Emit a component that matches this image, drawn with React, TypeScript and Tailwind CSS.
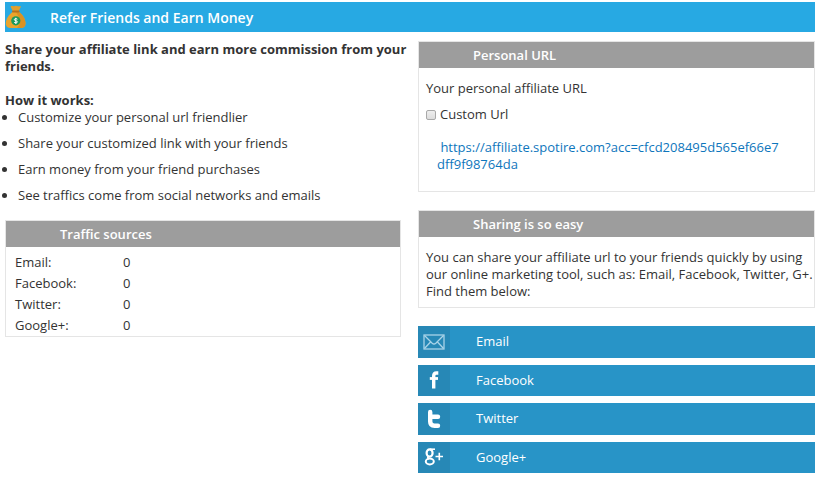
import type { ReactNode } from "react";

const MoneyBagIcon = () => (
  <svg viewBox="0 0 22 24" className="w-[22px] h-6" aria-hidden="true">
    <path
      d="M7.5 7C4 9.500 0.800 14 0.800 18.500C0.800 21.800 3 23 6 23H15.500C18.500 23 20.500 21.500 20.500 18.500C20.500 14 17.500 9.500 14 7Z"
      fill="#eaa42c"
    />
    <path
      d="M10.800 7H14C17.500 9.500 20.500 14 20.500 18.500C20.500 21.500 18.500 23 15.500 23H12C17 19 14 11 10.800 7Z"
      fill="#db9223"
    />
    <path d="M5.500 1.500C7 0.500 8 1.600 9 1.200C10.500 0.500 11.500 0.500 13 1.200C14 1.600 15 0.700 16 1.600L13.800 6H7.700Z" fill="#e0a02e" />
    <rect x="7" y="5.600" width="7.600" height="1.800" rx="0.900" fill="#b5701f" />
    <circle cx="10.800" cy="15.800" r="4.600" fill="#1d9a5b" />
    <path
      d="M12.400 14.200C11.600 13.400 9.300 13.400 9.300 14.700C9.300 16.100 12.400 15.400 12.400 16.900C12.400 18.200 10 18.200 9.200 17.300M10.800 12.800V18.800"
      fill="none"
      stroke="#fff"
      strokeWidth="1"
    />
  </svg>
);

const MailIcon = () => (
  <svg viewBox="0 0 22 16" className="w-[22px] h-4" fill="none" stroke="#a9d3e8" strokeWidth="1.300" aria-hidden="true">
    <rect x="1" y="1" width="20" height="14" />
    <path d="M1.500 1.500L9.200 9.200Q11 10.800 12.800 9.200L20.500 1.500M1.500 14.500L7.500 8M20.500 14.500L14.500 8" />
  </svg>
);

const FacebookIcon = () => (
  <svg viewBox="0 0 10 18" className="w-2.5 h-[18px]" fill="none" stroke="#fff" aria-hidden="true">
    <path d="M4.700 17.500V5Q4.700 2 7.500 2H9.300" strokeWidth="3.400" />
    <path d="M0.800 7.500H9" strokeWidth="2.800" />
  </svg>
);

const TwitterIcon = () => (
  <svg viewBox="0 0 14 20" className="w-3.5 h-5" fill="none" stroke="#fff" strokeWidth="4.400" strokeLinecap="round" aria-hidden="true">
    <path d="M3.200 3V12.500Q3.200 16.800 7.500 16.800H11" />
    <path d="M3.500 7.800H11" />
  </svg>
);

const GooglePlusIcon = () => (
  <svg viewBox="0 0 20 18" className="w-5 h-[18px]" fill="none" stroke="#fff" aria-hidden="true">
    <ellipse cx="5.600" cy="5" rx="3" ry="3.600" strokeWidth="2.200" />
    <path d="M5.800 1.200H11" strokeWidth="1.600" />
    <path d="M4.200 8.500Q3.200 10 5.200 10.700" strokeWidth="1.800" />
    <ellipse cx="5.800" cy="13.500" rx="4" ry="2.900" strokeWidth="2" />
    <path d="M11.500 8.500H19M15.300 4.800V12.200" strokeWidth="1.600" />
  </svg>
);

const steps = [
  "Customize your personal url friendlier",
  "Share your customized link with your friends",
  "Earn money from your friend purchases",
  "See traffics come from social networks and emails",
];

const traffic = [
  { source: "Email:", count: 0 },
  { source: "Facebook:", count: 0 },
  { source: "Twitter:", count: 0 },
  { source: "Google+:", count: 0 },
];

const networks = [
  { name: "Email", icon: <MailIcon /> },
  { name: "Facebook", icon: <FacebookIcon /> },
  { name: "Twitter", icon: <TwitterIcon /> },
  { name: "Google+", icon: <GooglePlusIcon /> },
];

function Panel({ title, children }: { title: string; children: ReactNode }) {
  return (
    <section className="border border-[#e5e5e5]">
      <h2 className="bg-[#9d9d9d] text-white font-semibold h-[26px] leading-[26px] pl-[54px]">
        {title}
      </h2>
      {children}
    </section>
  );
}

export default function App() {
  return (
    <main className="pt-0.5 pl-[5px] pr-[3px] bg-white text-[#333] text-[13px] leading-[17px] font-['Open_Sans',sans-serif]">
      <header className="flex items-center h-[30px] bg-[#27a9e3] text-white">
        <MoneyBagIcon />
        <h1 className="ml-[23px] text-[14px] font-semibold">Refer Friends and Earn Money</h1>
      </header>

      <div className="grid grid-cols-2 gap-4 pt-[9px]">
        <div className="pr-px">
          <p className="font-bold -mr-3">
            Share your affiliate link and earn more commission from your friends.
          </p>
          <h2 className="font-bold mt-[17px]">How it works:</h2>
          <ul className="list-disc pl-[13px] space-y-[9px] mb-4">
            {steps.map((step) => (
              <li key={step}>{step}</li>
            ))}
          </ul>

          <Panel title="Traffic sources">
            <table className="mt-[5px] ml-[9px]">
              <tbody>
                {traffic.map((row) => (
                  <tr key={row.source} className="h-[21px]">
                    <th scope="row" className="w-[108px] text-left font-normal">{row.source}</th>
                    <td>{row.count}</td>
                  </tr>
                ))}
              </tbody>
            </table>
          </Panel>
        </div>

        <div>
          <Panel title="Personal URL">
            <div className="px-[7px] pt-3 pb-[18px]">
              <p>Your personal affiliate URL</p>
              <label className="flex items-center gap-1 mt-[9px]">
                <input
                  type="checkbox"
                  className="appearance-none w-2.5 h-2.5 border border-[#a9a9a9] rounded-xs bg-linear-to-b from-[#eee] to-[#ddd] checked:bg-[#27a9e3]"
                />
                Custom Url
              </label>
              <p className="mt-4 ml-[11px] mr-6">
                <a href="https://affiliate.spotire.com?acc=cfcd208495d565ef66e7dff9f98764da" className="text-[#0e76bc] break-all">
                  &nbsp;https://affiliate.spotire.com?acc=cfcd208495d565ef66e7dff9f98764da
                </a>
              </p>
            </div>
          </Panel>

          <div className="mt-[18px]">
            <Panel title="Sharing is so easy">
              <p className="pl-[7px] pt-3 pb-[7px]">
                You can share your affiliate url to your friends quickly by using our online marketing tool, such as: Email, Facebook, Twitter, G+. Find them below:
              </p>
            </Panel>
          </div>

          <div className="grid grid-rows-4 gap-[7px] h-[147px] mt-[18px]">
            {networks.map((network) => (
              <button key={network.name} type="button" className="flex items-stretch bg-[#2894c7] text-white text-left">
                <span className="flex items-center justify-center w-8 bg-[#2788b6]">
                  {network.icon}
                </span>
                <span className="self-center ml-[26px]">{network.name}</span>
              </button>
            ))}
          </div>
        </div>
      </div>
    </main>
  );
}
